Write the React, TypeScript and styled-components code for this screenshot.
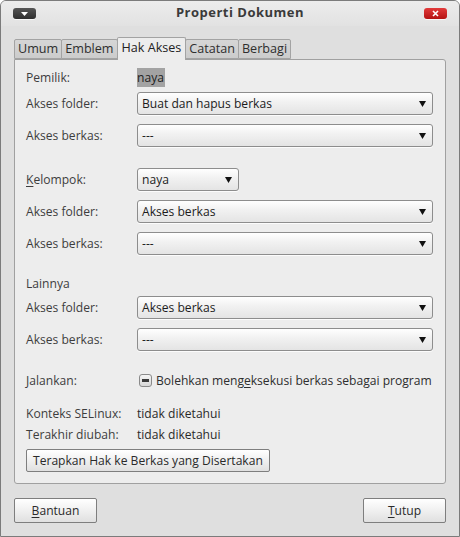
import React from "react";
import styled, { createGlobalStyle } from "styled-components";

const FS = "12.1px";

const Global = createGlobalStyle`
  html, body { margin: 0; padding: 0; background: #ffffff; }
  body { font-family: "Open Sans", "DejaVu Sans", sans-serif; font-size: 12px; color: #333; }
  * { box-sizing: border-box; }
`;

const Window = styled.div`
  width: 460px;
  height: 537px;
  border: 1px solid #7b7b7b;
  border-radius: 6px 6px 0 0;
  background: #dfdfdf;
  display: flex;
  flex-direction: column;
  overflow: hidden;
`;

const TitleBar = styled.div`
  height: 25px;
  flex: none;
  display: flex;
  align-items: center;
  justify-content: space-between;
  padding: 0 12px 3px 12px;
  background: linear-gradient(#ececec, #e2e2e2);
  position: relative;
`;

const Title = styled.div`
  position: absolute;
  left: 20px;
  right: 0;
  top: 2px;
  text-align: center;
  font-weight: 700;
  font-size: 13px;
  letter-spacing: 0.5px;
  color: #3a3a3a;
  pointer-events: none;
`;

const WinButton = styled.div<{ $red?: boolean }>`
  width: 23px;
  height: 11px;
  border-radius: 3px;
  background: ${(p) => (p.$red ? "linear-gradient(#e23a3a, #b51313)" : "linear-gradient(#555, #2f2f2f)")};
  box-shadow: 0 1px 0 rgba(255, 255, 255, 0.7);
  display: flex;
  align-items: center;
  justify-content: center;
  margin-top: 3px;
`;

const Body = styled.div`
  flex: 1;
  display: flex;
  flex-direction: column;
  padding: 11px 13px 13px 13px;
`;

const TabStrip = styled.div`
  display: flex;
  align-items: flex-end;
  height: 22px;
  padding-left: 1px;
  position: relative;
  z-index: 1;
`;

const Tab = styled.div<{ $active?: boolean }>`
  height: ${(p) => (p.$active ? "23px" : "20px")};
  margin-bottom: ${(p) => (p.$active ? "-1px" : "0")};
  padding: ${(p) => (p.$active ? "0 4px 3px 4px" : "0 3px 1px 3px")};
  display: flex;
  align-items: center;
  border: 1px solid #a3a3a3;
  border-bottom: ${(p) => (p.$active ? "none" : "1px solid #a3a3a3")};
  margin-left: -1px;
  border-radius: 2px 2px 0 0;
  background: ${(p) => (p.$active ? "#ededed" : "linear-gradient(#d6d6d6, #cccccc)")};
  color: ${(p) => (p.$active ? "#222" : "#2e2e2e")};
  font-size: 12.6px;
  white-space: nowrap;
`;

const Page = styled.div`
  height: 425px;
  flex: none;
  border: 1px solid #a0a0a0;
  border-radius: 0 3px 3px 3px;
  background: #ededed;
  padding: 8px 12px 10px 11px;
  display: flex;
  flex-direction: column;
`;

const Row = styled.div<{ $mt: number; $h?: number }>`
  display: flex;
  align-items: center;
  margin-top: ${(p) => p.$mt}px;
  height: ${(p) => p.$h ?? 23}px;
  flex: none;
`;

const Label = styled.div`
  width: 111px;
  flex: none;
  color: #3d3d3d;
  font-size: ${FS};
  white-space: nowrap;
`;

const Heading = styled.div`
  color: #3d3d3d;
  font-size: ${FS};
`;

const Value = styled.div`
  color: #2a2a2a;
  font-size: ${FS};
`;

const Selected = styled.span`
  background: #a3a3a3;
  color: #1e1e1e;
  padding: 1px 1px 1px 0;
  font-size: ${FS};
`;

const Combo = styled.div<{ $w?: number }>`
  height: 23px;
  width: ${(p) => (p.$w ? `${p.$w}px` : "auto")};
  flex: ${(p) => (p.$w ? "none" : "1")};
  border: 1px solid #8d8d8d;
  border-radius: 3px;
  background: linear-gradient(#ffffff 0%, #f2f2f2 40%, #e4e4e4 100%);
  box-shadow: 0 1px 0 rgba(255, 255, 255, 0.8);
  display: flex;
  align-items: center;
  justify-content: space-between;
  padding: 0 6px 0 4px;
  color: #1c1c1c;
  font-size: ${FS};
`;

const Arrow = () => (
  <svg width="7" height="7" viewBox="0 0 7 7">
    <path d="M0 1 L7 1 L3.5 7 Z" fill="#111" />
  </svg>
);

const Check = styled.div`
  width: 13px;
  height: 13px;
  flex: none;
  border: 1px solid #8a8a8a;
  border-radius: 3px;
  background: linear-gradient(#f4f4f4, #d8d8d8);
  display: flex;
  align-items: center;
  justify-content: center;
  margin: 0 4px 0 2px;
  &::after {
    content: "";
    width: 7px;
    height: 3px;
    background: #3a3a3a;
  }
`;

const CheckText = styled.div`
  color: #2e2e2e;
  font-size: ${FS};
  white-space: nowrap;
`;

const U = styled.span`
  text-decoration: underline;
  text-underline-offset: 2px;
`;

const Button = styled.div<{ $w?: number }>`
  height: ${(p) => (p.$w ? "25px" : "23px")};
  width: ${(p) => (p.$w ? `${p.$w}px` : "auto")};
  padding: 0 6px;
  border: 1px solid #7e7e7e;
  border-radius: 2px;
  background: linear-gradient(#ffffff 0%, #f0f0f0 50%, #e0e0e0 100%);
  display: flex;
  align-items: center;
  justify-content: center;
  color: #2a2a2a;
  font-size: ${FS};
  white-space: nowrap;
  flex: none;
`;

const Footer = styled.div`
  display: flex;
  justify-content: space-between;
  margin-top: 14px;
`;

const AccessRows = ({ first, folder }: { first: number; folder: string }) => (
  <>
    <Row $mt={first}>
      <Label>Akses folder:</Label>
      <Combo>
        <span>{folder}</span>
        <Arrow />
      </Combo>
    </Row>
    <Row $mt={9}>
      <Label>Akses berkas:</Label>
      <Combo>
        <span>---</span>
        <Arrow />
      </Combo>
    </Row>
  </>
);

export default function App() {
  return (
    <>
      <Global />
      <Window>
        <TitleBar>
          <WinButton>
            <svg width="7" height="4" viewBox="0 0 7 4">
              <path d="M0 0 L7 0 L3.5 4 Z" fill="#fff" />
            </svg>
          </WinButton>
          <Title>Properti Dokumen</Title>
          <WinButton $red>
            <svg width="7" height="7" viewBox="0 0 7 7">
              <path d="M1 1 L6 6 M6 1 L1 6" stroke="#fff" strokeWidth="1.6" />
            </svg>
          </WinButton>
        </TitleBar>
        <Body>
          <TabStrip>
            <Tab>Umum</Tab>
            <Tab>Emblem</Tab>
            <Tab $active>Hak Akses</Tab>
            <Tab>Catatan</Tab>
            <Tab>Berbagi</Tab>
          </TabStrip>
          <Page>
            <Row $mt={0} $h={18}>
              <Label>Pemilik:</Label>
              <Selected>naya</Selected>
            </Row>
            <AccessRows first={6} folder="Buat dan hapus berkas" />

            <Row $mt={21}>
              <Label>
                <U>K</U>elompok:
              </Label>
              <Combo $w={102}>
                <span>naya</span>
                <Arrow />
              </Combo>
            </Row>
            <AccessRows first={9} folder="Akses berkas" />

            <Row $mt={19} $h={18}>
              <Heading>Lainnya</Heading>
            </Row>
            <AccessRows first={4} folder="Akses berkas" />

            <Row $mt={20} $h={18}>
              <Label>Jalankan:</Label>
              <Check />
              <CheckText>
                Bolehkan meng<U>e</U>ksekusi berkas sebagai program
              </CheckText>
            </Row>

            <Row $mt={15} $h={18}>
              <Label>Konteks SELinux:</Label>
              <Value>tidak diketahui</Value>
            </Row>
            <Row $mt={3} $h={18}>
              <Label>Terakhir diubah:</Label>
              <Value>tidak diketahui</Value>
            </Row>
            <Row $mt={6}>
              <Button>Terapkan Hak ke Berkas yang Disertakan</Button>
            </Row>
          </Page>
          <Footer>
            <Button $w={83}>
              <U>B</U>antuan
            </Button>
            <Button $w={83}>
              <U>T</U>utup
            </Button>
          </Footer>
        </Body>
      </Window>
    </>
  );
}
